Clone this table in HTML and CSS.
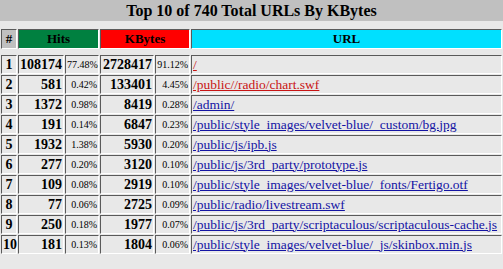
FILE: index.html
```html
<!DOCTYPE html>
<html>
<head>
<meta charset="utf-8">
<link rel="stylesheet" href="styles.css">
</head>
<body>
<div class="title">Top 10 of 740 Total URLs By KBytes</div>
<table class="stats">
<colgroup>
<col class="c-rank"><col class="c-num1"><col class="c-pct1"><col class="c-num2"><col class="c-pct2"><col class="c-url">
</colgroup>
<tr class="head">
<th class="h-rank">#</th>
<th class="h-hits" colspan="2">Hits</th>
<th class="h-kb" colspan="2">KBytes</th>
<th class="h-url">URL</th>
</tr>
<tr class="spacer"><td colspan="6"></td></tr>
<tr class="row"><td class="rank">1</td><td class="num">108174</td><td class="pct">77.48%</td><td class="num">2728417</td><td class="pct">91.12%</td><td class="url"><a class="red" href="#">/</a></td></tr>
<tr class="row"><td class="rank">2</td><td class="num">581</td><td class="pct">0.42%</td><td class="num">133401</td><td class="pct">4.45%</td><td class="url"><a class="red" href="#">/public//radio/chart.swf</a></td></tr>
<tr class="row"><td class="rank">3</td><td class="num">1372</td><td class="pct">0.98%</td><td class="num">8419</td><td class="pct">0.28%</td><td class="url"><a href="#">/admin/</a></td></tr>
<tr class="row"><td class="rank">4</td><td class="num">191</td><td class="pct">0.14%</td><td class="num">6847</td><td class="pct">0.23%</td><td class="url"><a href="#">/public/style_images/velvet-blue/_custom/bg.jpg</a></td></tr>
<tr class="row"><td class="rank">5</td><td class="num">1932</td><td class="pct">1.38%</td><td class="num">5930</td><td class="pct">0.20%</td><td class="url"><a href="#">/public/js/ipb.js</a></td></tr>
<tr class="row"><td class="rank">6</td><td class="num">277</td><td class="pct">0.20%</td><td class="num">3120</td><td class="pct">0.10%</td><td class="url"><a href="#">/public/js/3rd_party/prototype.js</a></td></tr>
<tr class="row"><td class="rank">7</td><td class="num">109</td><td class="pct">0.08%</td><td class="num">2919</td><td class="pct">0.10%</td><td class="url"><a href="#">/public/style_images/velvet-blue/_fonts/Fertigo.otf</a></td></tr>
<tr class="row"><td class="rank">8</td><td class="num">77</td><td class="pct">0.06%</td><td class="num">2725</td><td class="pct">0.09%</td><td class="url"><a href="#">/public/radio/livestream.swf</a></td></tr>
<tr class="row"><td class="rank">9</td><td class="num">250</td><td class="pct">0.18%</td><td class="num">1977</td><td class="pct">0.07%</td><td class="url"><a href="#">/public/js/3rd_party/scriptaculous/scriptaculous-cache.js</a></td></tr>
<tr class="row"><td class="rank">10</td><td class="num">181</td><td class="pct">0.13%</td><td class="num">1804</td><td class="pct">0.06%</td><td class="url"><a href="#">/public/style_images/velvet-blue/_js/skinbox.min.js</a></td></tr>
</table>
</body>
</html>
```
FILE: styles.css
```css
html, body {
  margin: 0;
  padding: 0;
  background: #e8e8e8;
  font-family: "Liberation Serif", "Times New Roman", serif;
  color: #000;
}
.title {
  width: 503px;
  height: 21px;
  line-height: 21px;
  background: #c0c0c0;
  text-align: center;
  font-weight: bold;
  font-size: 16px;
  margin-bottom: 7px;
}
.stats {
  width: 503px;
  table-layout: fixed;
  border-collapse: separate;
  border-spacing: 1px;
}
.c-rank { width: 16px; }
.c-num1 { width: 46px; }
.c-pct1 { width: 34px; }
.c-num2 { width: 54px; }
.c-pct2 { width: 35px; }
.c-url { width: 311px; }
.stats th, .stats td {
  box-sizing: border-box;
  border-style: solid;
  border-width: 1px;
  border-color: #5a5a5a #ffffff #ffffff #5a5a5a;
  padding: 0 1px;
  white-space: nowrap;
  overflow: visible;
}
.head th {
  height: 20px;
  font-size: 13px;
  font-weight: bold;
  text-align: center;
  color: #000;
}
.h-rank { background: #c0c0c0; }
.h-hits { background: #008040; color: #001a0a; }
.h-kb { background: #ff0000; color: #200000; }
.h-url { background: #00e0ff; color: #000; }
.spacer td {
  height: 4px;
  border: none;
  padding: 0;
}
.row td {
  height: 19px;
}
.rank {
  text-align: center;
  font-weight: bold;
  font-size: 14px;
  padding: 0;
}
.num {
  text-align: right;
  font-weight: bold;
  font-size: 14px;
}
.pct {
  text-align: right;
  font-size: 10px;
  padding-top: 1px;
}
.url {
  text-align: left;
  font-size: 13.5px;
}
.url a {
  color: #1414a4;
  text-decoration: underline;
}
.url a.red {
  color: #c81414;
}
```
